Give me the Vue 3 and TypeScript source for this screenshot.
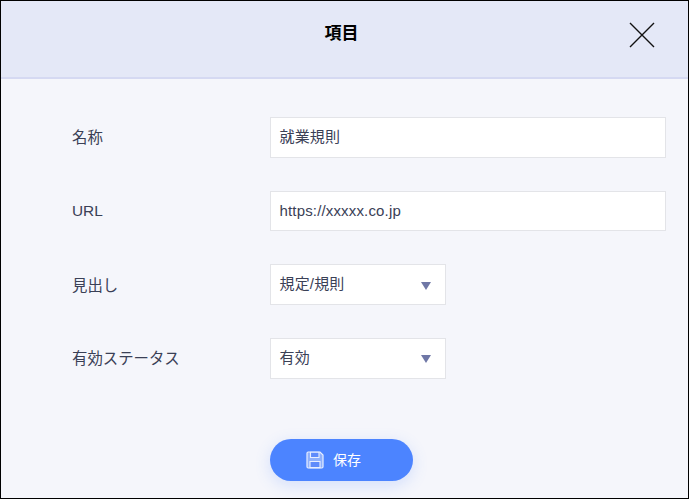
<script setup lang="ts">
interface Row { label: string; value: string; kind: 'text' | 'select'; latin?: boolean }
const rows: Row[] = [
  { label: '名称', value: '就業規則', kind: 'text' },
  { label: 'URL', value: 'https://xxxxx.co.jp', kind: 'text', latin: true },
  { label: '見出し', value: '規定/規則', kind: 'select' },
  { label: '有効ステータス', value: '有効', kind: 'select' },
]
</script>

<template>
  <div class="dialog">
    <header class="head">
      <h1 class="title">項目</h1>
      <svg class="close" width="26" height="26" viewBox="0 0 26 26">
        <path d="M1 1 L25 25 M25 1 L1 25" stroke="#111" stroke-width="1.4" fill="none" />
      </svg>
    </header>
    <main class="body">
      <div v-for="r in rows" :key="r.label" class="row" :class="{ latin: r.latin }">
        <span class="label">{{ r.label }}</span>
        <div class="field" :class="r.kind">
          <span class="val">{{ r.value }}</span>
          <i v-if="r.kind === 'select'" class="arrow"></i>
        </div>
      </div>
      <div class="actions">
        <button class="save" type="button">
          <svg width="18" height="18" viewBox="0 0 18 18" fill="none">
            <path d="M1 2.2 Q1 1 2.2 1 H14 L17 4 V15.8 Q17 17 15.8 17 H2.2 Q1 17 1 15.8 Z" stroke="#e8eeff" stroke-width="1.2" fill="#8fb0fc" />
            <path d="M4.5 1.2 H13 V6.5 H4.5 Z" stroke="#e8eeff" stroke-width="1.1" fill="#5f8bfb" />
            <path d="M4 10.5 H14 V16.6 H4 Z" stroke="#e8eeff" stroke-width="1.1" fill="#5f8bfb" />
          </svg>
          <span>保存</span>
        </button>
      </div>
    </main>
  </div>
</template>

<style>
html, body { margin: 0; }
</style>

<style scoped>
.dialog {
  box-sizing: border-box;
  width: 689px;
  height: 499px;
  border: 1px solid #000;
  background: #f5f6fb;
  display: flex;
  flex-direction: column;
  overflow: hidden;
  font-family: "Liberation Sans", "Noto Sans CJK JP", sans-serif;
}
.head {
  box-sizing: border-box;
  height: 78px;
  flex: none;
  background: #e4e8f7;
  border-bottom: 2px solid #d5d9f2;
  display: flex;
  align-items: center;
  justify-content: center;
  padding-right: 6px;
  position: relative;
}
.title {
  margin: 0 0 16px;
  font-size: 17px;
  font-weight: 700;
  color: #000;
}
.close {
  position: absolute;
  left: 628px;
  top: 21px;
}
.body {
  flex: 1;
  display: flex;
  flex-direction: column;
  padding: 38px 22px 0 70px;
  gap: 33px;
}
.row {
  display: flex;
  align-items: center;
  height: 40.67px;
}
.label {
  width: 198px;
  margin-left: 1px;
  margin-bottom: 2px;
  flex: none;
  font-size: 15.4px;
  color: #3a4056;
}
.field {
  box-sizing: border-box;
  height: 100%;
  background: #fff;
  border: 1px solid #e3e4e8;
  display: flex;
  align-items: center;
  justify-content: space-between;
  padding: 0 14px 0 8.5px;
  font-size: 15px;
  letter-spacing: 0.16px;
  color: #3a4056;
}
.val { margin-bottom: 4px; }
.latin .label,
.latin .val { margin-bottom: 0; }
.text { width: 396px; }
.select { width: 176px; }
.arrow {
  width: 0;
  height: 0;
  margin-top: 2px;
  border-left: 5.5px solid transparent;
  border-right: 5.5px solid transparent;
  border-top: 8px solid #6f77a6;
}
.actions {
  display: flex;
  padding: 27px 0 0 199px;
}
.save {
  width: 143px;
  height: 42px;
  border: 0;
  border-radius: 21px;
  background: #4c84ff;
  box-shadow: 0 4px 16px rgba(76, 132, 255, 0.2);
  color: #fff;
  font: inherit;
  font-size: 14px;
  display: flex;
  align-items: center;
  justify-content: flex-start;
  gap: 9px;
  padding: 0 0 0 36px;
}
.save span { margin-bottom: 2px; }
</style>
